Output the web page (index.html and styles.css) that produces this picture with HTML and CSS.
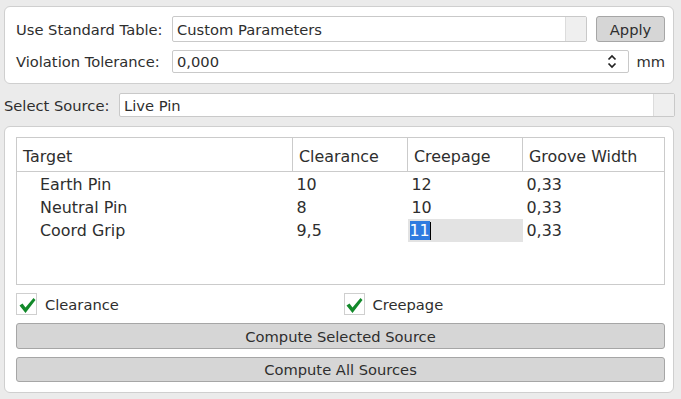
FILE: index.html
```html
<!DOCTYPE html>
<html lang="en">
<head>
    <meta charset="UTF-8">
    <title>Clearance and Creepage</title>
    <link rel="stylesheet" href="styles.css">
</head>
<body>
    <div class="panel top-panel">
        <div class="form-row">
            <span class="row-label">Use Standard Table:</span>
            <div class="combo wide">
                <span class="combo-text">Custom Parameters</span>
                <span class="combo-drop"></span>
            </div>
            <button class="btn apply">Apply</button>
        </div>
        <div class="form-row">
            <span class="row-label">Violation Tolerance:</span>
            <div class="spin">
                <span class="combo-text">0,000</span>
                <svg class="spin-arrows" width="10" height="17" viewBox="0 0 10 17">
                    <path d="M1.5 6.5 L5 3 L8.5 6.5" fill="none" stroke="#222" stroke-width="1.7"/>
                    <path d="M1.5 10.5 L5 14 L8.5 10.5" fill="none" stroke="#222" stroke-width="1.7"/>
                </svg>
            </div>
            <span class="unit">mm</span>
        </div>
    </div>

    <div class="source-row">
        <span class="source-label">Select Source:</span>
        <div class="combo source-combo">
            <span class="combo-text">Live Pin</span>
            <span class="combo-drop"></span>
        </div>
    </div>

    <div class="panel bottom-panel">
        <div class="table-box">
            <table class="rules">
                <thead>
                    <tr>
                        <th class="col-target">Target</th>
                        <th class="col-num">Clearance</th>
                        <th class="col-num">Creepage</th>
                        <th class="col-last">Groove Width</th>
                    </tr>
                </thead>
                <tbody>
                    <tr>
                        <td class="target">Earth Pin</td>
                        <td>10</td>
                        <td>12</td>
                        <td>0,33</td>
                    </tr>
                    <tr>
                        <td class="target">Neutral Pin</td>
                        <td>8</td>
                        <td>10</td>
                        <td>0,33</td>
                    </tr>
                    <tr>
                        <td class="target">Coord Grip</td>
                        <td>9,5</td>
                        <td class="editing"><span class="sel">11</span><span class="caret"></span></td>
                        <td>0,33</td>
                    </tr>
                </tbody>
            </table>
        </div>

        <div class="checks">
            <label class="check">
                <span class="box">
                    <svg width="18" height="18" viewBox="0 0 18 18"><path d="M1.5 9.5 L4.5 7.5 L7.5 11.5 L15.5 2 L17.5 4 L7.5 17 Z" fill="#12892a"/></svg>
                </span>
                Clearance
            </label>
            <label class="check second">
                <span class="box">
                    <svg width="18" height="18" viewBox="0 0 18 18"><path d="M1.5 9.5 L4.5 7.5 L7.5 11.5 L15.5 2 L17.5 4 L7.5 17 Z" fill="#12892a"/></svg>
                </span>
                Creepage
            </label>
        </div>

        <button class="btn full">Compute Selected Source</button>
        <button class="btn full last">Compute All Sources</button>
    </div>
</body>
</html>
```

FILE: styles.css
```css
body {
    margin: 0;
    padding: 6px 7px 6px 4px;
    background: #ebebeb;
    font-family: "DejaVu Sans", Verdana, sans-serif;
    font-size: 14.7px;
    color: #2e2e2e;
}
.panel {
    background: #fff;
    border: 1px solid #cfcfcf;
    border-radius: 6px;
}
.top-panel {
    padding: 9px 8px 10px 11px;
}
.form-row {
    display: flex;
    align-items: center;
}
.form-row + .form-row {
    margin-top: 8px;
}
.row-label {
    width: 156px;
    flex: none;
}
.combo, .spin {
    display: flex;
    align-items: center;
    background: #fff;
    border: 1px solid #c9c9c9;
    border-radius: 2px;
    box-sizing: border-box;
}
.combo.wide {
    flex: 1;
    height: 26px;
}
.combo-text {
    flex: 1;
    padding-left: 4px;
}
.combo-drop {
    align-self: stretch;
    width: 20px;
    background: #efefef;
    border-left: 1px solid #dcdcdc;
}
.btn {
    font-family: inherit;
    font-size: 14.7px;
    color: #2e2e2e;
    background: #d6d6d6;
    border: 1px solid #a6a6a6;
    border-radius: 3px;
    padding: 0;
    box-sizing: border-box;
}
.apply {
    width: 69px;
    height: 26px;
    margin-left: 9px;
}
.spin {
    flex: 1;
    height: 23px;
    padding-right: 11px;
}
.spin-arrows {
    display: block;
}
.unit {
    width: 36px;
    text-align: right;
}
.source-row {
    display: flex;
    align-items: center;
    margin: 9px -1px 0 0;
}
.source-label {
    width: 115px;
    flex: none;
}
.source-combo {
    flex: 1;
    height: 24px;
}
.bottom-panel {
    margin-top: 9px;
    padding: 10px 8px 10px 11px;
}
.table-box {
    height: 148px;
    border: 1px solid #cbcbcb;
    box-sizing: border-box;
}
.rules {
    width: 100%;
    border-collapse: collapse;
    table-layout: fixed;
    font-size: 15.9px;
}
.rules th {
    height: 30px;
    font-weight: normal;
    text-align: left;
    padding: 3px 0 0 6px;
    border-bottom: 1px solid #cbcbcb;
}
.rules th + th {
    border-left: 1px solid #cbcbcb;
}
.col-target { width: 269px; }
.col-num { width: 108px; }
.rules td {
    height: 23px;
    padding: 0 0 0 4px;
}
.rules tbody tr:first-child td {
    padding-top: 1px;
}
.rules td.target {
    padding-left: 23px;
}
.rules td.editing {
    background: #e3e3e3;
    padding-left: 2px;
}
.sel {
    background: #2f7be0;
    color: #fff;
}
.caret {
    display: inline-block;
    width: 1px;
    height: 18px;
    background: #000;
    vertical-align: middle;
}
.checks {
    display: grid;
    grid-template-columns: 1fr 1fr;
    margin: 8px 0;
}
.check {
    display: flex;
    align-items: center;
    gap: 8px;
}
.check.second {
    padding-left: 3px;
}
.box {
    width: 19px;
    height: 20px;
    border: 1px solid #cfcfcf;
    display: flex;
    align-items: flex-end;
    justify-content: center;
}
.box svg {
    display: block;
}
.btn.full {
    display: block;
    width: 100%;
    height: 26px;
    margin-bottom: 8px;
}
.btn.full.last {
    height: 25px;
    margin-bottom: 0;
}
```
